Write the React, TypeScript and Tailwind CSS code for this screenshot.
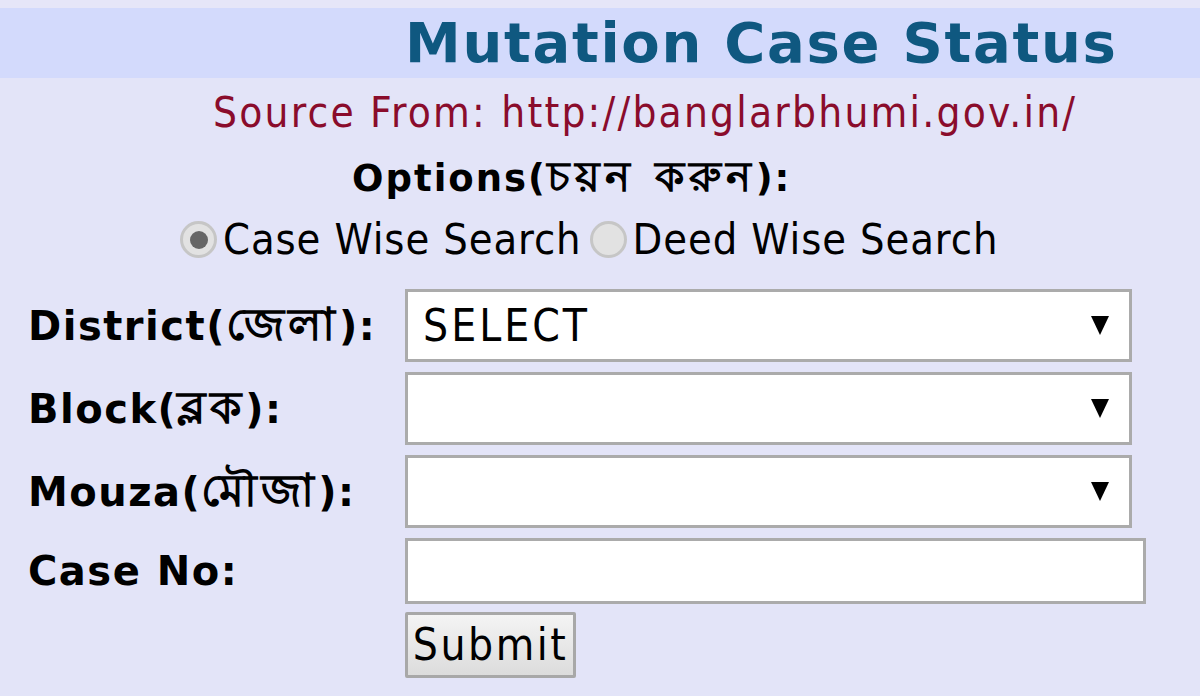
import React from 'react'

const sans = "font-['DejaVu_Sans_Condensed','DejaVu_Sans',sans-serif]"
const bold = "font-['DejaVu_Sans','Verdana',sans-serif] font-bold"

function Radio({ checked }: { checked?: boolean }) {
  return (
    <span className="inline-flex items-center justify-center w-[37px] h-[37px] rounded-full bg-[#e2e2e2] border-[3px] border-[#c6c6c6] shrink-0">
      {checked && <span className="w-[18px] h-[18px] rounded-full bg-[#666]" />}
    </span>
  )
}

function Arrow() {
  return (
    <svg width="18" height="19" viewBox="0 0 18 19" className="shrink-0">
      <polygon points="0,0 18,0 9,19" fill="#000" />
    </svg>
  )
}

function SelectBox({ value }: { value?: string }) {
  return (
    <div className="h-[73px] w-[727px] bg-white border-[3px] border-[#ababab] flex items-center justify-between pl-[15px] pr-[20px]">
      <span className={`${sans} text-[44px] tracking-[3px] text-black leading-none`}>{value}</span>
      <Arrow />
    </div>
  )
}

export default function App() {
  const rows = [
    { label: 'District', bn: 'জেলা', value: 'SELECT' },
    { label: 'Block', bn: 'ব্লক', value: '' },
    { label: 'Mouza', bn: 'মৌজা', value: '' },
  ]

  return (
    <div className="w-[1200px] h-[696px] bg-[#e3e4f8] overflow-hidden">
      <div className="h-[8px] bg-[#e6e6f8]" />
      <div className="h-[70px] bg-[#d3dafc] flex items-center pl-[405px]">
        <h1 className={`${bold} text-[56px] tracking-[1.7px] leading-none text-[#0f5880]`}>Mutation Case Status</h1>
      </div>

      <p className={`${sans} text-[42px] tracking-[2.2px] leading-none text-[#8a0c2c] pl-[213px] mt-[14px]`}>
        Source From: http://banglarbhumi.gov.in/
      </p>

      {/* bengali runs are set larger; zero leading keeps the line box from growing */}
      <p className={`${bold} text-[37px] tracking-[2px] leading-none text-black pl-[352px] mt-[26px]`}>
        Options(<span className="text-[42px] tracking-[5px] leading-[0]">চয়ন করুন</span>):
      </p>

      <div className="flex items-center pl-[180px] mt-[21px]">
        <Radio checked />
        <span className={`${sans} text-[43px] tracking-[0.9px] leading-none text-black ml-[6px] mr-[8px]`}>Case Wise Search</span>
        <Radio />
        <span className={`${sans} text-[43px] tracking-[0.9px] leading-none text-black ml-[6px]`}>Deed Wise Search</span>
      </div>

      <div className="grid grid-cols-[377px_1fr] pl-[28px] mt-[28px] gap-y-[10px] items-center">
        {rows.map(r => (
          <React.Fragment key={r.label}>
            <span className={`${bold} text-[40px] tracking-[1.5px] leading-none text-black`}>
              {r.label}(<span className="text-[45px] tracking-[4px] leading-[0]">{r.bn}</span>):
            </span>
            <SelectBox value={r.value} />
          </React.Fragment>
        ))}
        <span className={`${bold} text-[40px] tracking-[1.5px] leading-none text-black`}>Case No:</span>
        <div className="h-[66px] w-[741px] bg-white border-[3px] border-[#ababab]" />
        <span />
        <div className="-mt-[2px]">
          <button className={`${sans} text-[44px] tracking-[2.5px] leading-none text-black h-[66px] w-[171px] flex items-center justify-center bg-gradient-to-b from-[#f4f4f4] to-[#dcdcdc] border-[3px] border-[#a8a8a8] rounded-[2px]`}>
            Submit
          </button>
        </div>
      </div>
    </div>
  )
}
